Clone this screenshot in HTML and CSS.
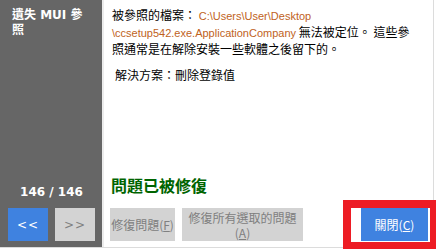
FILE: index.html
```html
<!DOCTYPE html>
<html>
<head>
<meta charset="utf-8">
<link rel="stylesheet" href="styles.css">
</head>
<body>
<div class="window">
  <aside class="sidebar">
    <div class="title">遺失 MUI 參照</div>
    <div class="counter">146 / 146</div>
    <div class="nav">
      <button class="nav-btn prev">&lt;&lt;</button>
      <button class="nav-btn next">&gt;&gt;</button>
    </div>
  </aside>
  <main class="main">
    <div class="desc">
      <p class="msg">被參照的檔案： <span class="path">C:\Users\User\Desktop \ccsetup542.exe.ApplicationCompany</span> 無法被定位。 這些參照通常是在解除安裝一些軟體之後留下的。</p>
      <p class="solution">解決方案：刪除登錄值</p>
    </div>
    <div class="status">問題已被修復</div>
    <div class="actions">
      <button class="act fix">修復問題(<u>F</u>)</button>
      <button class="act fix-all">修復所有選取的問題<br>(<u>A</u>)</button>
      <button class="act close">關閉(<u>C</u>)</button>
    </div>
  </main>
  <div class="highlight"></div>
</div>
</body>
</html>
```
FILE: styles.css
```css
html, body {
  margin: 0;
  padding: 0;
  background: #ffffff;
}
body {
  width: 436px;
  height: 249px;
  overflow: hidden;
  font-family: "Noto Sans CJK TC", sans-serif;
  font-size: 12px;
}
.window {
  position: relative;
  display: flex;
  width: 433px;
  height: 247px;
  border-right: 1px solid #dcdcdc;
  border-bottom: 1px solid #dcdcdc;
}
.sidebar {
  width: 104px;
  background: #666666;
  display: flex;
  flex-direction: column;
  box-sizing: border-box;
  padding: 8px 7px 6px 8px;
  border-right: 2px solid #ececec;
  flex-shrink: 0;
}
.title {
  color: #ffffff;
  font-family: "DejaVu Sans", "Noto Sans CJK TC", sans-serif;
  font-weight: bold;
  font-size: 12px;
  line-height: 15px;
  padding-left: 4px;
  padding-right: 8px;
}
.counter {
  margin-top: auto;
  color: #ffffff;
  font-family: "DejaVu Sans", sans-serif;
  font-weight: bold;
  font-size: 12px;
  line-height: 14px;
  text-align: center;
  margin-bottom: 9px;
}
.nav {
  display: flex;
  gap: 7px;
}
.nav-btn {
  width: 41px;
  height: 33px;
  border: none;
  padding: 0;
  font-family: "DejaVu Sans", sans-serif;
  font-size: 12px;
  letter-spacing: 1px;
}
.prev {
  background: #3f82e0;
  color: #ffffff;
}
.next {
  background: #d3d3d3;
  color: #808080;
}
.main {
  flex: 1;
  display: flex;
  flex-direction: column;
  padding: 7px 5px 6px 6px;
  box-sizing: border-box;
  min-width: 0;
}
.desc {
  padding-left: 2px;
  padding-right: 12px;
}
.msg {
  margin: 0;
  line-height: 15px;
  color: #000000;
}
.path {
  color: #c0621c;
  font-family: "Liberation Sans", sans-serif;
  font-size: 11px;
}
.solution {
  margin: 11px 0 0 3px;
  line-height: 15px;
}
.status {
  margin-top: auto;
  color: #006400;
  font-weight: bold;
  font-size: 16px;
  line-height: 18px;
  margin-bottom: 14px;
  padding-left: 1px;
}
.actions {
  display: flex;
  gap: 7px;
  height: 33px;
}
.act {
  border: none;
  padding: 0;
  height: 33px;
  font-family: "Noto Sans CJK TC", sans-serif;
  font-size: 12px;
  line-height: 15px;
}
.fix {
  width: 65px;
  background: #d3d3d3;
  color: #808080;
}
.fix-all {
  width: 121px;
  background: #d3d3d3;
  color: #808080;
}
.close {
  margin-left: auto;
  width: 67px;
  background: #3f82e0;
  color: #ffffff;
}
.highlight {
  position: absolute;
  left: 343px;
  top: 200px;
  width: 79px;
  height: 34px;
  border-style: solid;
  border-color: #ed1c24;
  border-width: 8px 6px 7px 8px;
}
```
